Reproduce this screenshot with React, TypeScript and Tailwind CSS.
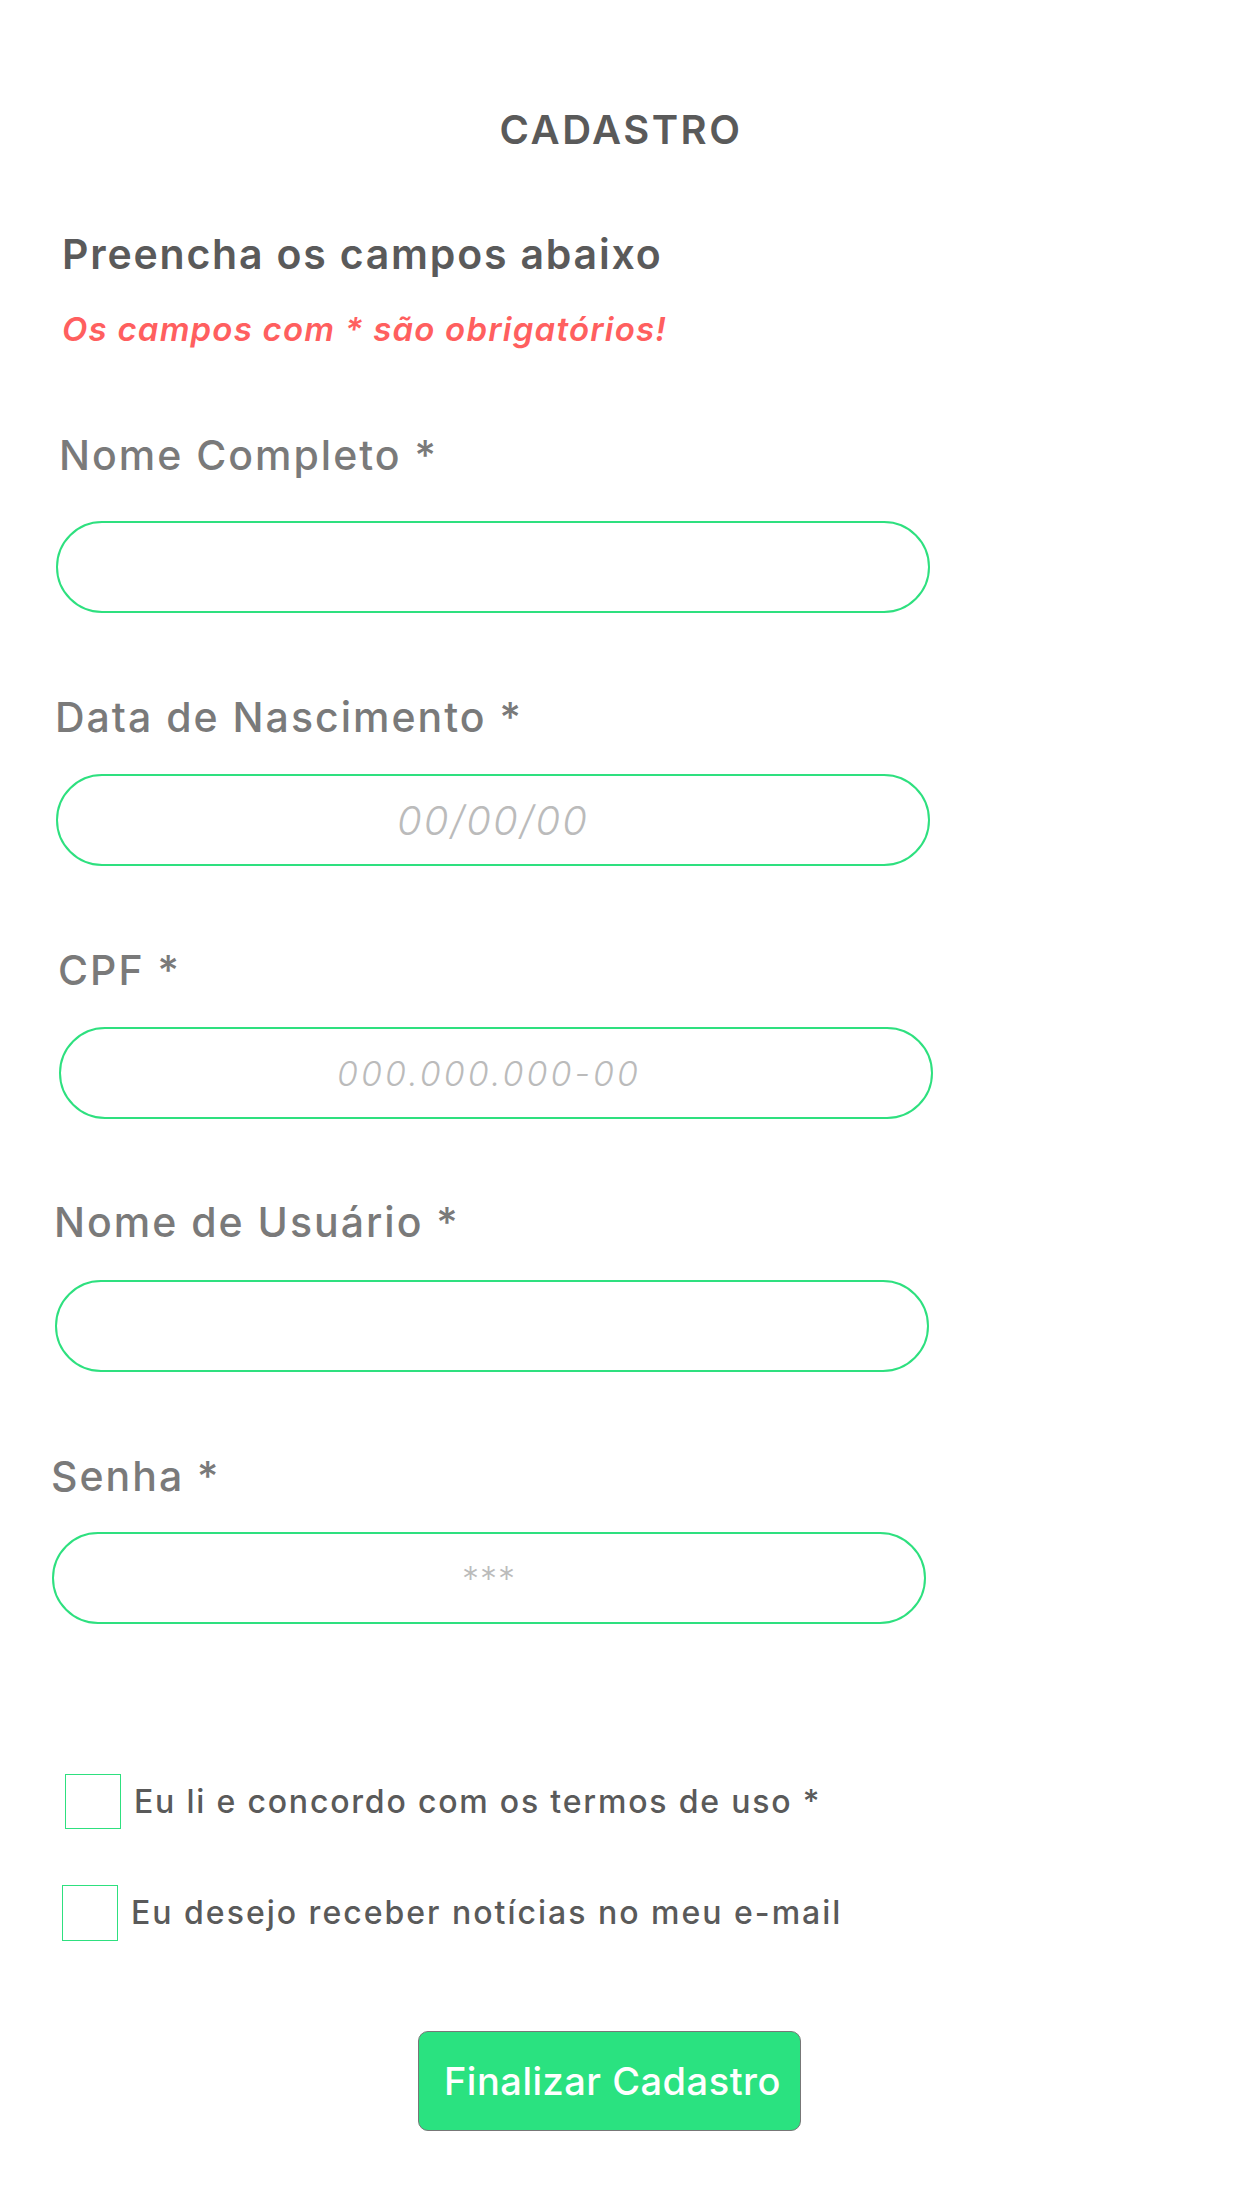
import React from "react";

type FieldProps = {
  label: string;
  placeholder?: string;
  labelClass: string;
  inputClass: string;
  placeholderClass?: string;
};

const Field: React.FC<FieldProps> = ({
  label,
  placeholder,
  labelClass,
  inputClass,
  placeholderClass = "text-[40px] tracking-[2px]",
}) => {
  return (
    <div className="flex flex-col">
      <label className={"text-[41px] leading-[48px] tracking-[2px] font-medium text-[#7a7a7a] " + labelClass}>
        {label}
      </label>
      <input
        type="text"
        placeholder={placeholder}
        className={
          "w-[874px] h-[92px] rounded-full border-2 border-[#2ee07f] bg-white text-center italic font-light text-[#777] placeholder:text-[#bbbbbb] outline-none " +
          placeholderClass +
          " " +
          inputClass
        }
      />
    </div>
  );
};

export default function App() {
  return (
    <div
      className="w-[1242px] min-h-[2208px] bg-white"
      style={{ fontFamily: "Inter, 'Noto Sans', sans-serif" }}
    >
      <h1 className="pt-[106px] text-center text-[40px] leading-[48px] tracking-[2.5px] font-semibold text-[#5a5a5a]">
        CADASTRO
      </h1>

      <div className="flex flex-col pl-[56px]">
        <h2 className="mt-[76px] ml-[6px] text-[41px] leading-[48px] tracking-[1.8px] font-semibold text-[#5a5a5a]">
          Preencha os campos abaixo
        </h2>
        <p className="mt-[31px] ml-[6px] text-[33px] leading-[40px] tracking-[1.2px] font-semibold italic text-[#ff5f5f]">
          Os campos com * são obrigatórios!
        </p>

        <div className="mt-[82px]">
          <Field label="Nome Completo *" labelClass="ml-[3px] mb-[42px]" inputClass="ml-0" />
        </div>
        <div className="mt-[80px]">
          <Field
            label="Data de Nascimento *"
            placeholder="00/00/00"
            labelClass="-ml-[1px] mb-[33px]"
            inputClass="ml-0"
          />
        </div>
        <div className="mt-[80px]">
          <Field
            label="CPF *"
            placeholder="000.000.000-00"
            labelClass="ml-[2px] mb-[33px]"
            inputClass="ml-[3px] pr-[14px]"
            placeholderClass="text-[34px] tracking-[3px]"
          />
        </div>
        <div className="mt-[79px]">
          <Field label="Nome de Usuário *" labelClass="-ml-[2px] mb-[34px]" inputClass="-ml-[1px]" />
        </div>
        <div className="mt-[80px]">
          <Field
            label="Senha *"
            placeholder="***"
            labelClass="-ml-[5px] mb-[32px]"
            inputClass="-ml-[4px]"
            placeholderClass="text-[34px] tracking-[1px] not-italic"
          />
        </div>

        <label className="mt-[150px] ml-[9px] flex items-center gap-[13px]">
          <span className="w-[56px] h-[55px] border border-[#2ee07f] bg-white shrink-0" />
          <span className="text-[32px] leading-[40px] tracking-[1.8px] font-medium text-[#5a5a5a]">
            Eu li e concordo com os termos de uso *
          </span>
        </label>
        <label className="mt-[56px] ml-[6px] flex items-center gap-[13px]">
          <span className="w-[56px] h-[56px] border border-[#2ee07f] bg-white shrink-0" />
          <span className="text-[32px] leading-[40px] tracking-[2px] font-medium text-[#5a5a5a]">
            Eu desejo receber notícias no meu e-mail
          </span>
        </label>

        <div className="mt-[90px] ml-[362px]">
          <button className="w-[383px] h-[100px] rounded-[10px] border border-[#777] bg-[#2ae280] pl-[6px] text-white text-[38px] tracking-[0.5px] font-medium">
            Finalizar Cadastro
          </button>
        </div>
      </div>
    </div>
  );
}
